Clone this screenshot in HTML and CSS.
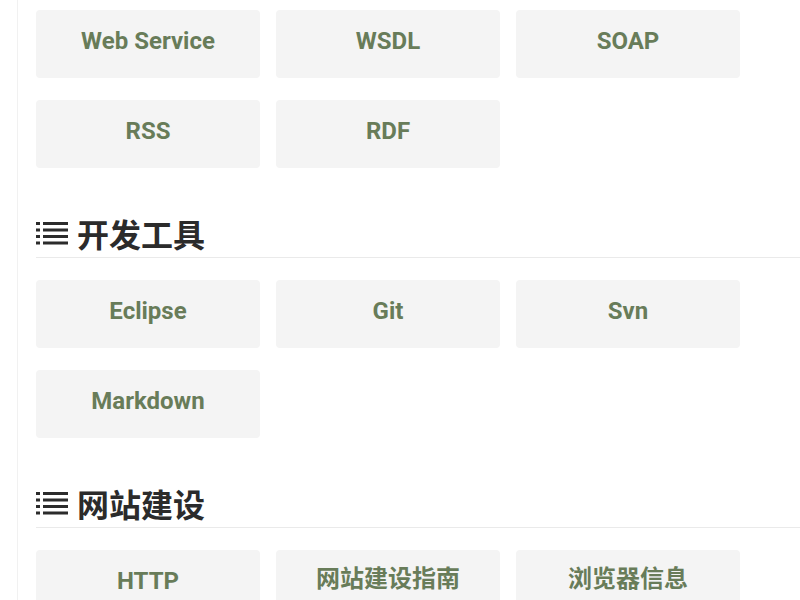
FILE: index.html
```html
<!DOCTYPE html>
<html lang="zh">
<head>
<meta charset="utf-8">
<link rel="stylesheet" href="styles.css">
</head>
<body>
<div class="page">
  <div class="grid first">
    <div class="item">Web Service</div>
    <div class="item">WSDL</div>
    <div class="item">SOAP</div>
    <div class="item">RSS</div>
    <div class="item">RDF</div>
  </div>
  <h2 class="heading">
    <svg class="icon" viewBox="0 0 32 24" width="32" height="24"><g fill="#2b2b2b"><rect x="0" y="1" width="4" height="3"/><rect x="7" y="1" width="25" height="3"/><rect x="0" y="7.5" width="4" height="3"/><rect x="7" y="7.5" width="25" height="3"/><rect x="0" y="14" width="4" height="3"/><rect x="7" y="14" width="25" height="3"/><rect x="0" y="20.5" width="4" height="3"/><rect x="7" y="20.5" width="25" height="3"/></g></svg>
    <span>开发工具</span>
  </h2>
  <div class="grid">
    <div class="item">Eclipse</div>
    <div class="item">Git</div>
    <div class="item">Svn</div>
    <div class="item">Markdown</div>
  </div>
  <h2 class="heading">
    <svg class="icon" viewBox="0 0 32 24" width="32" height="24"><g fill="#2b2b2b"><rect x="0" y="1" width="4" height="3"/><rect x="7" y="1" width="25" height="3"/><rect x="0" y="7.5" width="4" height="3"/><rect x="7" y="7.5" width="25" height="3"/><rect x="0" y="14" width="4" height="3"/><rect x="7" y="14" width="25" height="3"/><rect x="0" y="20.5" width="4" height="3"/><rect x="7" y="20.5" width="25" height="3"/></g></svg>
    <span>网站建设</span>
  </h2>
  <div class="grid">
    <div class="item">HTTP</div>
    <div class="item cjk">网站建设指南</div>
    <div class="item cjk">浏览器信息</div>
  </div>
</div>
</body>
</html>
```
FILE: styles.css
```css
html, body {
  margin: 0;
  padding: 0;
  background: #fff;
  overflow: hidden;
}
body {
  font-family: Roboto, "Noto Sans CJK SC", sans-serif;
}
.page {
  margin-left: 17px;
  border-left: 1px solid #f1f1f1;
  padding-left: 18px;
  padding-top: 10px;
  min-height: 600px;
}
.grid {
  display: grid;
  grid-template-columns: 224px 224px 224px;
  column-gap: 16px;
  row-gap: 22px;
  margin-top: 22px;
}
.grid.first {
  margin-top: 0;
}
.item {
  box-sizing: border-box;
  height: 68px;
  padding-bottom: 6px;
  background: #f4f4f4;
  border-radius: 4px;
  display: flex;
  align-items: center;
  justify-content: center;
  font-size: 24px;
  line-height: 30px;
  font-weight: 700;
  color: #687c59;
}
.item.cjk {
  padding-bottom: 10px;
}
.heading {
  box-sizing: border-box;
  margin: 47px 0 0 0;
  height: 43px;
  padding-bottom: 6px;
  border-bottom: 1px solid #eaeaea;
  display: flex;
  align-items: center;
  gap: 9px;
  font-size: 32px;
  font-weight: 700;
  color: #2b2b2b;
  font-family: "Noto Sans CJK SC", sans-serif;
  line-height: 36px;
}
.icon {
  display: block;
  flex: none;
}
```
